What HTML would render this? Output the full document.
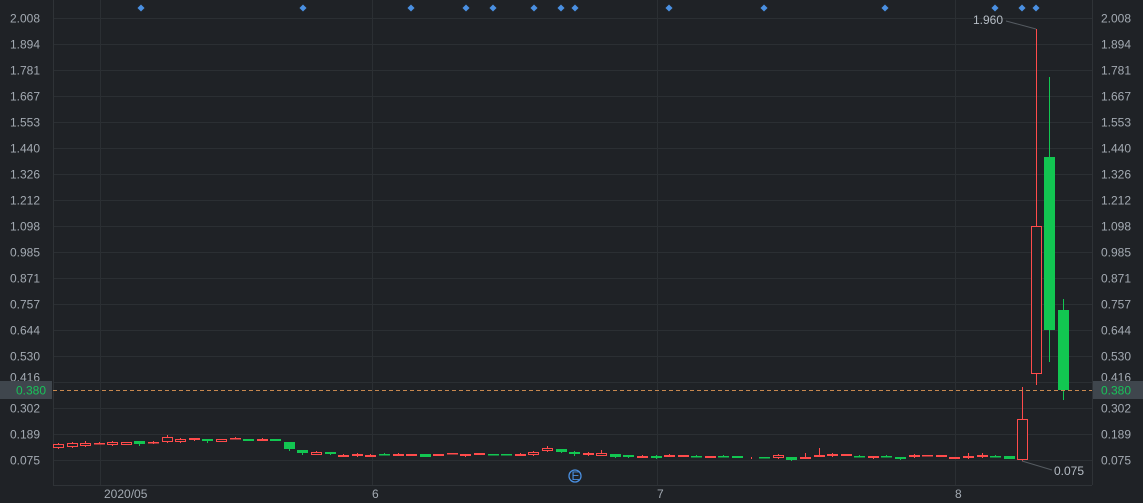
<!DOCTYPE html>
<html><head><meta charset="utf-8"><style>
html,body{margin:0;padding:0;background:#1f2226;width:1143px;height:503px;overflow:hidden;font-family:"Liberation Sans",sans-serif}
svg text{font-family:"Liberation Sans",sans-serif;font-size:12px}
</style></head><body>
<svg id="s" width="1143" height="503" xmlns="http://www.w3.org/2000/svg">
<rect width="1143" height="503" fill="#1f2226"/>
<g id="grid" stroke="#2b2f33" stroke-width="1"></g>
<line x1="53.5" y1="0" x2="53.5" y2="485" stroke="#2f3337"/>
<line x1="1092.5" y1="0" x2="1092.5" y2="485" stroke="#2f3337"/>
<line x1="53" y1="485.5" x2="1092" y2="485.5" stroke="#2f3337"/>
<g id="lab" fill="#a3aab2" font-size="12"></g>
<g id="c"></g>
<line x1="53" y1="390.5" x2="1092" y2="390.5" stroke="#c8884f" stroke-dasharray="4,3"/>
<rect x="0" y="381" width="52" height="18" fill="#3f464d"/>
<rect x="1093" y="381" width="50" height="18" fill="#3f464d"/>
<text x="16" y="394.5" fill="#19c25a">0.380</text>
<text x="1101" y="394.5" fill="#19c25a">0.380</text>
<g id="d" fill="#4a90e2"></g>
<circle cx="575" cy="476" r="6" fill="none" stroke="#4a90e2" stroke-width="1.3"/>
<text x="571.5" y="480" fill="#4a90e2" font-size="10">E</text>
<text x="104" y="498" fill="#a3aab2">2020/05</text>
<text x="372" y="498" fill="#a3aab2">6</text>
<text x="657" y="498" fill="#a3aab2">7</text>
<text x="955" y="498" fill="#a3aab2">8</text>
<text x="973" y="24" fill="#b5bcc4" font-size="13">1.960</text>
<line x1="1006" y1="21" x2="1036" y2="29" stroke="#555b61"/>
<text x="1054" y="475" fill="#b5bcc4" font-size="13">0.075</text>
<line x1="1022" y1="461" x2="1052" y2="470" stroke="#555b61"/>
</svg>
<script>
var ns="http://www.w3.org/2000/svg";
function el(p,t,a){var e=document.createElementNS(ns,t);for(var k in a)e.setAttribute(k,a[k]);document.getElementById(p).appendChild(e);return e;}
var ticks=["2.008","1.894","1.781","1.667","1.553","1.440","1.326","1.212","1.098","0.985","0.871","0.757","0.644","0.530","0.416","0.302","0.189","0.075"];
for(var i=0;i<ticks.length;i++){
 var yy=Math.round(18+i*25.98)+0.5;
 el("grid","line",{x1:53,x2:1092,y1:yy,y2:yy});
 var dy=(ticks[i]==="0.416")?-1:4;
 var t=el("lab","text",{x:10,y:yy+dy});t.textContent=ticks[i];
 var t2=el("lab","text",{x:1101,y:yy+dy});t2.textContent=ticks[i];
}
[100,372,657,955].forEach(function(x){el("grid","line",{x1:x+.5,x2:x+.5,y1:0,y2:485});});
[141,303,411,466,493,534,561,575,669,764,885,995,1022,1036].forEach(function(x){el("d","rect",{x:x-2.5,y:5.5,width:5,height:5,transform:"rotate(45 "+x+" 8)"});});
var C=[
["r",444,448,443,449],["r",443,447,442,448],["r",443,446,441,447],["r",443,443,442,444],["r",442,445,441,446],["r",442,445,442,445],["g",441,444,441,446],["r",442,442,441,444],["r",437,442,435,443],["r",439,442,438,443],["r",438,440,438,441],["g",439,441,439,443],["r",439,442,439,442],["r",438,438,437,439],["g",439,441,439,441],["r",439,441,438,441],["g",439,441,439,441],["g",442,449,442,451],["g",450,453,450,455],["r",452,455,451,455],["g",452,454,452,455],["r",455,457,454,457],["r",454,456,453,457],["r",455,457,454,457],
["g",454,454,453,455],["r",454,456,453,456],["r",454,456,454,456],["g",454,457,454,457],["r",454,456,454,456],["r",453,453,453,454],["r",454,456,454,457],["r",453,455,453,455],["g",454,454,454,454],["g",454,454,454,454],["r",454,456,453,456],["r",452,455,451,456],["r",448,451,446,452],["g",449,452,449,453],["g",452,454,451,456],["r",453,455,452,456],["r",453,456,450,456],["g",454,457,454,458],["g",455,457,455,458],["r",456,458,455,458],["g",456,458,455,459],["r",455,457,454,457],["r",455,457,455,457],["g",456,456,455,457],
["r",456,458,456,458],["g",456,456,455,457],["g",456,458,456,458],["r",458,459,457,459],["g",457,457,457,457],["r",455,458,454,459],["g",457,460,457,461],["r",457,459,453,459],["r",455,457,448,457],["r",454,456,453,457],["r",454,456,454,456],["g",456,456,455,457],["r",456,458,456,459],["g",456,456,455,457],["g",457,459,457,460],["r",455,457,454,458],["r",455,455,455,455],["r",455,457,455,457],["r",457,459,457,459],["r",456,458,453,459],["r",455,457,453,458],["g",456,456,455,457],["g",456,459,456,459],
["r",419,460,387,461],["r",226,374,29,385],["g",157,330,77,362],["g",310,390,299,400]
];
var n=C.length;
for(var i=0;i<n;i++){var c=C[i],x=Math.round(58+i*(1063-58)/(n-1)),col=c[0]=="r"?"#ff4b4b":"#12c651";
 el("c","line",{x1:x+.5,x2:x+.5,y1:c[3],y2:c[4],stroke:col,"stroke-width":1});
 if(c[2]-c[1]<1){el("c","rect",{x:x-5,y:c[1],width:11,height:1.5,fill:col});}
 else if(c[0]=="r"){el("c","rect",{x:x-4.5,y:c[1]+.5,width:10,height:c[2]-c[1]-1,fill:"#1f2226",stroke:col,"stroke-width":1});}
 else el("c","rect",{x:x-5,y:c[1],width:11,height:c[2]-c[1],fill:col});
}
</script>
</body></html>
